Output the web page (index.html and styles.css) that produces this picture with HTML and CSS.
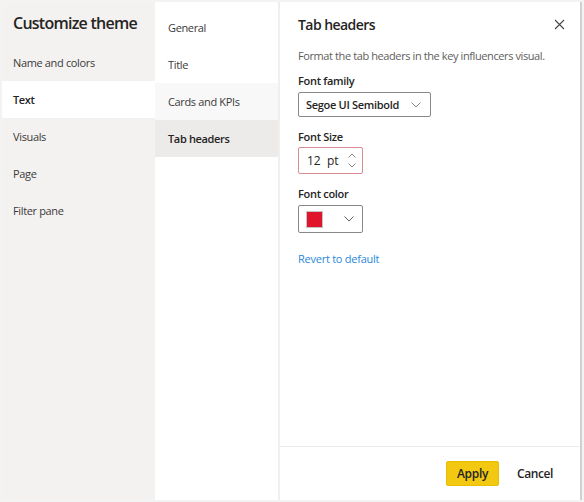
FILE: index.html
```html
<!DOCTYPE html>
<html>
<head>
  <meta charset="UTF-8">
  <title>Customize theme</title>
  <link rel="stylesheet" href="styles.css">
</head>
<body>
  <div class="frame">
    <div class="dialog">

      <div class="nav">
        <h1 class="nav-title">Customize theme</h1>
        <div class="nav-item">Name and colors</div>
        <div class="nav-item selected">Text</div>
        <div class="nav-item">Visuals</div>
        <div class="nav-item">Page</div>
        <div class="nav-item">Filter pane</div>
      </div>

      <div class="subnav">
        <div class="sub-item">General</div>
        <div class="sub-item">Title</div>
        <div class="sub-item hover">Cards and KPIs</div>
        <div class="sub-item selected">Tab headers</div>
      </div>

      <div class="panel">
        <div class="panel-body">
          <div class="panel-head">
            <h2 class="panel-title">Tab headers</h2>
            <svg class="close" width="11" height="11" viewBox="0 0 11 11">
              <path d="M1 1 L10 10 M10 1 L1 10" stroke="#484644" stroke-width="1.1" fill="none"/>
            </svg>
          </div>
          <p class="desc">Format the tab headers in the key influencers visual.</p>

          <label class="field-label first">Font family</label>
          <div class="select font-select">
            <span class="select-value">Segoe UI Semibold</span>
            <svg class="chev" width="10" height="6" viewBox="0 0 10 6">
              <path d="M0.5 0.5 L5 5 L9.5 0.5" stroke="#8a8886" stroke-width="1" fill="none"/>
            </svg>
          </div>

          <label class="field-label">Font Size</label>
          <div class="spin">
            <span class="spin-num">12</span>
            <span class="spin-unit">pt</span>
            <span class="spin-arrows">
              <svg width="8" height="5" viewBox="0 0 8 5"><path d="M0.5 4.5 L4 1 L7.5 4.5" stroke="#8a8886" stroke-width="1" fill="none"/></svg>
              <svg width="8" height="5" viewBox="0 0 8 5"><path d="M0.5 0.5 L4 4 L7.5 0.5" stroke="#8a8886" stroke-width="1" fill="none"/></svg>
            </span>
          </div>

          <label class="field-label">Font color</label>
          <div class="select color-select">
            <span class="swatch"></span>
            <svg class="chev" width="10" height="6" viewBox="0 0 10 6">
              <path d="M0.5 0.5 L5 5 L9.5 0.5" stroke="#605e5c" stroke-width="1" fill="none"/>
            </svg>
          </div>

          <a class="revert" href="#">Revert to default</a>
        </div>

        <div class="panel-foot">
          <button class="btn-apply">Apply</button>
          <button class="btn-cancel">Cancel</button>
        </div>
      </div>

    </div>
  </div>
</body>
</html>
```

FILE: styles.css
```css
body {
  margin: 0;
  background: #ffffff;
  font-family: "Segoe UI", "Open Sans", sans-serif;
  color: #252423;
}

.frame {
  padding: 2px 0 2px 2px;
  background: #f3f3f3;
  width: 582px;
}

.dialog {
  display: flex;
  height: 498px;
  width: 580px;
  background: #ffffff;
}

/* left column */
.nav {
  width: 153px;
  background: #f3f2f1;
}

.nav-title {
  margin: 0;
  height: 42px;
  padding-left: 11px;
  display: flex;
  align-items: center;
  font-size: 16px;
  font-weight: 600;
  letter-spacing: -0.75px;
  color: #252423;
}

.nav-item {
  height: 37px;
  display: flex;
  align-items: center;
  padding-left: 11px;
  font-size: 11px;
  letter-spacing: -0.35px;
  color: #3b3a39;
}

.nav-item.selected {
  background: #ffffff;
  font-weight: 600;
  color: #252423;
}

/* middle column */
.subnav {
  width: 123px;
  padding-top: 7px;
  border-right: 2px solid #f0efee;
  background: #ffffff;
}

.sub-item {
  height: 37px;
  display: flex;
  align-items: center;
  padding-left: 13px;
  font-size: 11px;
  letter-spacing: -0.35px;
  color: #3b3a39;
}

.sub-item.hover {
  background: #f8f8f8;
}

.sub-item.selected {
  background: #edebe9;
  font-weight: 600;
  color: #252423;
}

/* right panel */
.panel {
  flex: 1;
  display: flex;
  flex-direction: column;
  border-right: 2px solid #d2d0ce;
}

.panel-body {
  flex: 1;
  padding: 0 18px;
  display: flex;
  flex-direction: column;
  align-items: flex-start;
}

.panel-head {
  align-self: stretch;
  height: 44px;
  display: flex;
  align-items: center;
  justify-content: space-between;
}

.panel-title {
  margin: 0;
  font-size: 14px;
  font-weight: 600;
  letter-spacing: -0.55px;
}

.close {
  margin-right: -3px;
}

.desc {
  margin: 1px 0 0;
  font-size: 11px;
  line-height: 18px;
  letter-spacing: -0.4px;
  white-space: nowrap;
  color: #605e5c;
}

.field-label {
  margin-top: 12px;
  font-size: 11px;
  line-height: 16px;
  font-weight: 600;
  letter-spacing: -0.3px;
}

.field-label.first {
  margin-top: 8px;
}

.select {
  margin-top: 3px;
  box-sizing: border-box;
  border: 1px solid #8a8886;
  border-radius: 2px;
  display: flex;
  align-items: center;
  justify-content: space-between;
}

.font-select {
  width: 133px;
  height: 25px;
  padding: 0 9px 0 7px;
}

.select-value {
  font-size: 11px;
  font-weight: 600;
  letter-spacing: -0.3px;
}

.spin {
  margin-top: 2px;
  box-sizing: border-box;
  width: 65px;
  height: 27px;
  border: 1px solid #d98b92;
  border-radius: 2px;
  display: flex;
  align-items: center;
  padding-left: 8px;
  font-size: 12px;
}

.spin-num {
  width: 20px;
}

.spin-unit {
  flex: 1;
}

.spin-arrows {
  display: flex;
  flex-direction: column;
  gap: 5px;
  margin-right: 6px;
}

.spin-arrows svg {
  display: block;
}

.color-select {
  width: 65px;
  height: 28px;
  padding: 0 8px 0 7px;
}

.swatch {
  width: 17px;
  height: 17px;
  background: #e0142a;
  border: 1px solid #c4c4c4;
  box-sizing: border-box;
}

.revert {
  margin-top: 18px;
  font-size: 11px;
  letter-spacing: -0.25px;
  color: #2b88d8;
  text-decoration: none;
}

.panel-foot {
  height: 53px;
  border-top: 1px solid #edebe9;
  display: flex;
  align-items: center;
  justify-content: flex-end;
  padding-right: 25px;
  gap: 16px;
}

.btn-apply {
  width: 53px;
  height: 25px;
  border: 1px solid #e8be00;
  border-radius: 2px;
  background: #f2c811;
  font-family: inherit;
  font-size: 12px;
  font-weight: 600;
  letter-spacing: -0.3px;
  color: #252423;
}

.btn-cancel {
  height: 25px;
  border: none;
  background: none;
  padding: 0 2px;
  font-family: inherit;
  font-size: 12px;
  font-weight: 600;
  letter-spacing: -0.4px;
  color: #252423;
}
```
